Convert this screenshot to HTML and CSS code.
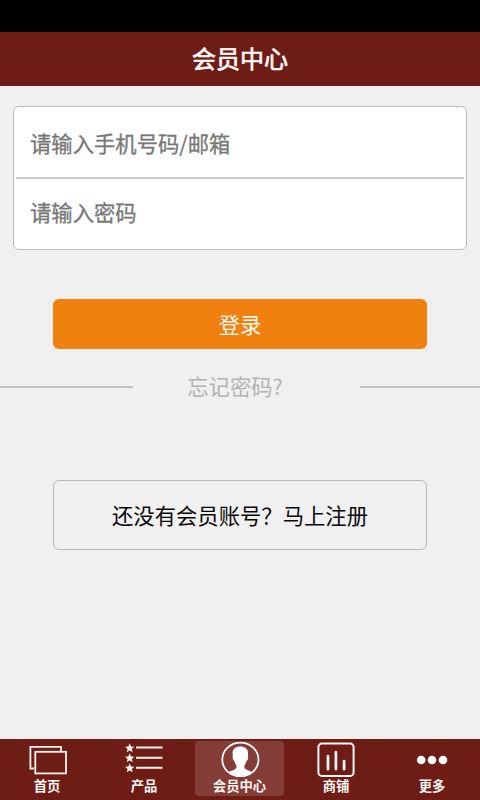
FILE: index.html
```html
<!DOCTYPE html>
<html lang="zh-CN">
<head>
<meta charset="utf-8">
<title>会员中心</title>
<link rel="stylesheet" href="styles.css">
</head>
<body>
<div class="status-bar"></div>
<header class="header"><h1>会员中心</h1></header>
<main class="content">
  <form class="login">
    <div class="fields">
      <input class="field" type="text" placeholder="请输入手机号码/邮箱">
      <input class="field" type="password" placeholder="请输入密码">
    </div>
    <button class="submit" type="button">登录</button>
  </form>
  <div class="forgot"><span class="rule"></span><a class="forgot-link">忘记密码?</a><span class="rule"></span></div>
  <a class="register">还没有会员账号？马上注册</a>
</main>
<nav class="tabs">
  <a class="tab home">
    <svg width="40" height="36" viewBox="0 0 40 36" fill="none" stroke="#fff3ef" stroke-width="1.8"><path d="M7 27.5H3.4V5.8H34V10"/><rect x="8.3" y="10.8" width="30.7" height="21.6"/></svg>
    <span>首页</span>
  </a>
  <a class="tab">
    <svg width="40" height="36" viewBox="0 0 40 36"><defs><path id="star" d="M0-4.8 1.3-1.5 4.7-1.3 2.1.9 3 4.3 0 2.4-3 4.3-2.1.9-4.7-1.3-1.3-1.5Z"/></defs><g fill="#fff3ef"><use href="#star" x="5.7" y="7"/><use href="#star" x="5.7" y="17"/><use href="#star" x="5.7" y="27"/></g><path d="M12 6.5H38.5M12 16.8H38.5M12 26.8H38.5" stroke="#fff3ef" stroke-width="1.9"/></svg>
    <span>产品</span>
  </a>
  <a class="tab active">
    <svg width="40" height="36" viewBox="0 0 40 36"><ellipse cx="20.4" cy="18.6" rx="18.1" ry="16.9" fill="none" stroke="#fff" stroke-width="1.7"/><path d="M20.3 5.4C15.5 5.4 12.4 8 12.6 12.4L12.8 15.3C12.2 16.5 13 19 14.2 19.7C14.8 22 15.6 23.5 16.4 24.5V27C15 29.2 11.5 29.5 8.8 31C15 36.5 25.7 36.5 32 31C29.3 29.5 25.8 29.2 24.4 27V24.5C25.2 23.5 26 22 26.6 19.7C27.8 19 28.5 16.5 27.9 15.3L28.1 12.4C28.2 8 25.1 5.4 20.3 5.4Z" fill="#fff"/></svg>
    <span>会员中心</span>
  </a>
  <a class="tab">
    <svg width="40" height="36" viewBox="0 0 40 36" fill="none" stroke="#fff7f5" stroke-linecap="round"><rect x="2.4" y="2.6" width="35.2" height="32.3" rx="3.5" stroke-width="2"/><path d="M12 15.2V28.2M19.9 11V28.2M28.1 20V28.2" stroke-width="2.7"/></svg>
    <span>商铺</span>
  </a>
  <a class="tab">
    <svg width="40" height="36" viewBox="0 0 40 36" fill="#fff"><circle cx="9.2" cy="19" r="4.3"/><circle cx="20" cy="19" r="4.3"/><circle cx="31" cy="19" r="4.3"/></svg>
    <span>更多</span>
  </a>
</nav>
</body>
</html>
```
FILE: styles.css
```css
* { box-sizing: border-box; }
body {
  margin: 0;
  height: 800px;
  display: flex;
  flex-direction: column;
  overflow: hidden;
  background: #f0f0f0;
  font-family: "Noto Sans CJK SC", sans-serif;
  font-size: 21.33px;
}
.status-bar { height: 32px; background: #000; }
.header {
  height: 54px;
  display: flex;
  justify-content: center;
  background: #6e1c16;
  color: #fff7f4;
}
.header h1 {
  margin: 0;
  font-size: 24px;
  line-height: 51px;
  font-weight: 400;
  -webkit-text-stroke: 0.7px currentColor;
}
.content { flex: 1; padding-top: 20px; }
.fields {
  height: 144px;
  margin: 0 13px;
  padding: 0 2px;
  background: #fff;
  border: 1px solid #bcbcbc;
  border-radius: 6px;
}
.field {
  display: block;
  width: 100%;
  height: 70px;
  padding: 0 14px;
  border: 0;
  outline: 0;
  background: none;
  font: inherit;
}
.field + .field {
  padding-bottom: 3px;
  border-top: 2px solid #cbcbcb;
}
.field::placeholder {
  color: #777;
  opacity: 1;
  -webkit-text-stroke: 0.3px #777;
}
.submit {
  display: block;
  width: 374px;
  height: 50px;
  margin: 49px auto 0;
  padding: 0 0 2px;
  border: 0;
  border-radius: 6px;
  background: #f08010;
  color: #fffaf0;
  font: inherit;
}
.forgot {
  display: flex;
  align-items: center;
  justify-content: space-between;
  height: 32px;
  margin-top: 22px;
}
.rule { width: 133px; height: 2px; background: #c3c3c3; }
.rule:last-child { width: 120px; }
.forgot-link { color: #b3b3b3; padding: 0 23px 3px 0; }
.register {
  display: flex;
  align-items: center;
  justify-content: center;
  width: 374px;
  height: 70px;
  margin: 77px auto 0;
  padding-bottom: 2px;
  border: 1px solid #b8b8b8;
  border-radius: 6px;
  color: #080808;
}
.tabs {
  display: flex;
  height: 61px;
  padding: 2px 0;
  background: #6e1c16;
}
.tab {
  width: 96px;
  display: flex;
  flex-direction: column;
  align-items: center;
  color: #fff7f4;
  font-size: 13.33px;
  line-height: 18px;
  font-weight: 700;
}
.tab svg { display: block; flex: none; }
.home { padding-right: 2px; }
.active {
  width: 89px;
  height: 55px;
  margin: 0 4px 0 3px;
  border-radius: 4px;
  background: #843c37;
}
```
